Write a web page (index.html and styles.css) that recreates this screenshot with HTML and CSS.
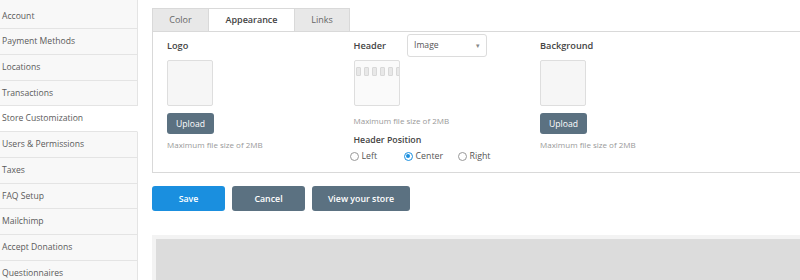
FILE: index.html
```html
<!DOCTYPE html>
<html lang="en">
  <head>
    <meta charset="UTF-8" />
    <title>Store Customization</title>
    <link rel="stylesheet" href="styles.css">
  </head>
  <body>
    <div class="sidebar">
      <div class="nav-item">Account</div>
      <div class="nav-item">Payment Methods</div>
      <div class="nav-item">Locations</div>
      <div class="nav-item">Transactions</div>
      <div class="nav-item active">Store Customization</div>
      <div class="nav-item">Users &amp; Permissions</div>
      <div class="nav-item">Taxes</div>
      <div class="nav-item">FAQ Setup</div>
      <div class="nav-item">Mailchimp</div>
      <div class="nav-item">Accept Donations</div>
      <div class="nav-item">Questionnaires</div>
    </div>

    <div class="main">
      <div class="tab-container">
        <div class="tab">Color</div>
        <div class="tab active">Appearance</div>
        <div class="tab">Links</div>
      </div>

      <div class="panel">
        <div class="column">
          <div class="field-head">
            <span class="label">Logo</span>
          </div>
          <div class="image-box"></div>
          <button class="upload-button">Upload</button>
          <p class="hint">Maximum file size of 2MB</p>
        </div>

        <div class="column">
          <div class="field-head">
            <span class="label">Header</span>
            <div class="select">
              <span>Image</span>
              <span class="arrow">&#9662;</span>
            </div>
          </div>
          <div class="image-box header-box">
            <div class="header-marks">
              <span></span><span></span><span></span><span></span><span></span><span></span>
            </div>
          </div>
          <p class="hint header-hint">Maximum file size of 2MB</p>
          <div class="label position-label">Header Position</div>
          <div class="radio-row">
            <label class="radio"><span class="radio-dot"></span>Left</label>
            <label class="radio checked"><span class="radio-dot"></span>Center</label>
            <label class="radio"><span class="radio-dot"></span>Right</label>
          </div>
        </div>

        <div class="column">
          <div class="field-head">
            <span class="label">Background</span>
          </div>
          <div class="image-box"></div>
          <button class="upload-button">Upload</button>
          <p class="hint">Maximum file size of 2MB</p>
        </div>
      </div>

      <div class="button-container">
        <button class="btn btn-primary">Save</button>
        <button class="btn">Cancel</button>
        <button class="btn btn-wide">View your store</button>
      </div>

      <div class="preview">
        <div class="preview-inner"></div>
      </div>
    </div>
  </body>
</html>
```

FILE: styles.css
```css
body {
  font-family: "Open Sans", "Liberation Sans", sans-serif;
  margin: 0;
  display: flex;
  overflow: hidden;
  color: #555;
}

.sidebar {
  width: 138px;
  flex-shrink: 0;
}

.nav-item {
  height: 24.7px;
  line-height: 24.7px;
  padding-left: 2px;
  font-size: 8.6px;
  color: #5a5a5a;
  background-color: #f8f8f8;
  border-bottom: 1px solid #e4e4e4;
  border-right: 1px solid #e4e4e4;
  white-space: nowrap;
}

.nav-item:first-child {
  padding-top: 4.2px;
  height: 24.2px;
}

.nav-item.active {
  background-color: #fff;
  border-right-color: #fff;
}

.main {
  flex: 1;
  padding: 8px 0 0 14px;
  min-width: 0;
}

.tab-container {
  display: flex;
}

.tab {
  height: 22px;
  line-height: 22px;
  font-size: 9px;
  text-align: center;
  color: #666;
  background-color: #e8e8e8;
  border: 1px solid #d9d9d9;
  border-bottom: none;
}

.tab:first-child {
  width: 55px;
}

.tab.active {
  width: 85px;
  background-color: #fff;
  color: #444;
  font-weight: 600;
  border-left: none;
  border-right: none;
  margin-bottom: -1px;
  position: relative;
}

.tab:last-child {
  width: 54px;
}

.panel {
  display: flex;
  height: 140px;
  padding: 0 0 0 14px;
  border: 1px solid #d9d9d9;
  border-right: none;
}

.column {
  width: 186.5px;
  flex-shrink: 0;
}

.field-head {
  display: flex;
  align-items: center;
  height: 24px;
  margin-top: 1px;
}

.label {
  font-size: 9.2px;
  font-weight: 600;
  color: #444;
}

.select {
  display: flex;
  justify-content: space-between;
  align-items: center;
  width: 66px;
  height: 21px;
  margin-left: 21px;
  padding: 0 6px;
  font-size: 8.6px;
  color: #555;
  border: 1px solid #dcdcdc;
  border-radius: 3px;
}

.arrow {
  font-size: 7px;
  color: #888;
}

.image-box {
  width: 44px;
  height: 44px;
  margin-top: 3px;
  background-color: #f6f6f6;
  border: 1px solid #dedede;
  border-radius: 2px;
}

.header-box {
  background-color: #fafafa;
  overflow: hidden;
}

.header-marks {
  display: flex;
  gap: 3px;
  padding: 6px 0 0 1px;
}

.header-marks span {
  flex-shrink: 0;
  width: 3px;
  height: 7px;
  background-color: #e8e8e8;
  border: 1px solid #d8d8d8;
  border-radius: 1px;
}

.upload-button {
  display: block;
  margin-top: 7px;
  width: 47px;
  height: 21px;
  padding: 0;
  font-family: inherit;
  font-size: 8.6px;
  color: #fff;
  background-color: #5b7181;
  border: none;
  border-radius: 3px;
}

.hint {
  margin: 5px 0 0;
  font-size: 8px;
  color: #999;
}

.header-hint {
  margin-top: 9px;
}

.position-label {
  margin-top: 8px;
  font-size: 8.8px;
}

.radio-row {
  display: flex;
  margin: 4px 0 0 -4px;
}

.radio {
  display: flex;
  align-items: center;
  gap: 3px;
  font-size: 8.8px;
  color: #555;
}

.radio:nth-child(1) {
  width: 54px;
}

.radio:nth-child(2) {
  width: 54px;
}

.radio-dot {
  width: 7px;
  height: 7px;
  border: 1px solid #999;
  border-radius: 50%;
  position: relative;
}

.radio.checked .radio-dot {
  border-color: #1a8fdf;
}

.radio.checked .radio-dot::after {
  content: "";
  position: absolute;
  left: 1.5px;
  top: 1.5px;
  width: 4px;
  height: 4px;
  border-radius: 50%;
  background-color: #1a8fdf;
}

.button-container {
  display: flex;
  gap: 7px;
  margin-top: 13px;
}

.btn {
  width: 73px;
  height: 25px;
  padding: 0;
  font-family: inherit;
  font-size: 8.8px;
  font-weight: 600;
  color: #fff;
  background-color: #5b7181;
  border: none;
  border-radius: 3px;
}

.btn-primary {
  background-color: #1a8fdf;
}

.btn-wide {
  width: 98px;
}

.preview {
  margin-top: 24px;
  height: 60px;
  padding: 4px 0 0 4px;
  background-color: #f3f3f3;
}

.preview-inner {
  height: 100%;
  background-color: #dcdcdc;
}
```
